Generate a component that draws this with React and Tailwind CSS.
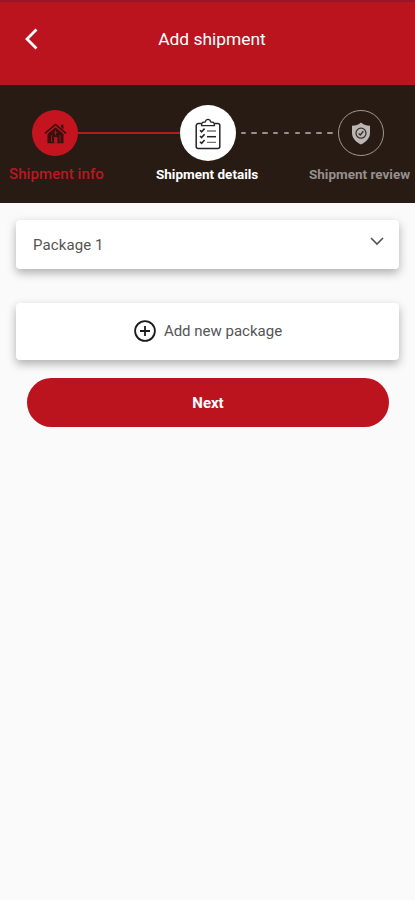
function HouseIcon() {
  return (
    <svg width="24" height="24" viewBox="0 0 24 24" fill="none">
      <path d="M2 12.400 12.500 3.500 23 12.400" stroke="#35100f" strokeWidth="1.600" />
      <path d="M18 3.800h2.500v4.500L18 6.200z" fill="#35100f" />
      <path d="M4.500 13 12.500 6.300l8 6.700v9.300h-16z" fill="#35100f" />
      <path d="M11 22.300v-6.200h3.500v6.200z" fill="#b01620" />
      <path d="M8.500 14v7M17 14v7M10.700 11.500h3.600M12.500 9.200v5" stroke="#b01620" strokeWidth=".8" />
    </svg>
  );
}

function ClipboardIcon() {
  return (
    <svg width="26" height="32" viewBox="0 0 26 32" fill="none" stroke="#252525">
      <path d="M6.500 5.600H3.200a2 2 0 0 0-2 2v21a2 2 0 0 0 2 2h19.600a2 2 0 0 0 2-2v-21a2 2 0 0 0-2-2h-3.300" strokeWidth="1.500" />
      <path d="M6.500 7.700c0-2.500.3-3.600 2.200-3.600h1.400C10.700 2.300 11.600 1.300 13 1.300s2.300 1 2.900 2.800h1.400c1.900 0 2.200 1.100 2.200 3.600z" strokeWidth="1.300" />
      <path d="m5 12.300 1.600 1.600 3-3.300M5 18l1.600 1.600 3-3.300M5 23.700l1.600 1.600 3-3.300" strokeWidth="1.600" />
      <path d="M12 13h9M12 24.400h9" stroke="#777" strokeWidth="1.300" />
      <path d="M12 18.700h9" strokeWidth="1.500" />
    </svg>
  );
}

function ShieldIcon() {
  return (
    <svg width="20" height="23" viewBox="0 0 20 23" fill="none">
      <path d="M10 .5C7.500 2.700 4.500 3.700 1 3.800v7c0 5.200 3.500 9 9 11.700 5.500-2.700 9-6.500 9-11.700v-7c-3.500-.1-6.500-1.100-9-3.300z" fill="#b9b6b4" />
      <circle cx="10" cy="11.200" r="5" stroke="#3d332d" strokeWidth="1.300" />
      <path d="m7.700 11.500 1.600 1.500 3.100-3.700" stroke="#3d332d" strokeWidth="1.400" />
    </svg>
  );
}

function Header() {
  return (
    <header className="flex h-[85px] items-start border-t-2 border-[#991727] bg-[#bb141f] text-white">
      <button className="ml-6 mt-[26px] w-[14px]" aria-label="Back">
        <svg width="14" height="22" viewBox="0 0 14 22" fill="none" stroke="white" strokeWidth="2.800">
          <path d="M12.500 1.500 3 11l9.500 9.500" />
        </svg>
      </button>
      <h1 className="mr-[29px] mt-[25px] flex-1 text-center text-[17.400px] leading-6">Add shipment</h1>
    </header>
  );
}

function Stepper() {
  return (
    <section className="h-[118px] bg-[#281b14] pt-5">
      <div className="flex h-14 items-center pl-8 pr-[31px]">
        <div className="flex size-[46px] shrink-0 items-center justify-center rounded-full bg-[#c4141f]">
          <HouseIcon />
        </div>
        <div className="h-[2px] w-[102px] shrink-0 bg-[#b71923]" />
        <div className="flex size-14 shrink-0 items-center justify-center rounded-full bg-white pt-0.5">
          <ClipboardIcon />
        </div>
        <div className="flex h-[2px] flex-1 justify-between pl-[4.500px] pr-[5.500px]">
          {Array.from({ length: 9 }, (_, i) => (
            <span key={i} className="h-[2px] w-[5.500px] rounded-full bg-[#96908c]" />
          ))}
        </div>
        <div className="flex size-[46px] shrink-0 items-center justify-center rounded-full border border-[#a39891]">
          <ShieldIcon />
        </div>
      </div>
      <div className="flex pl-[9px] pt-[3px] leading-5">
        <span className="w-[147px] text-[15px] font-medium tracking-[0.080px] text-[#bd1620]">Shipment info</span>
        <span className="w-[153px] text-[13.500px] font-bold text-white">Shipment details</span>
        <span className="whitespace-nowrap text-[13.500px] font-bold text-[#94908d]">Shipment review</span>
      </div>
    </section>
  );
}

export default function App() {
  return (
    <div className="min-h-[900px] w-[415px] bg-[#fafafa] font-[Roboto,sans-serif]">
      <Header />
      <Stepper />
      <main className="px-4 pt-[17px]">
        <button className="flex h-[49px] w-full items-center justify-between rounded-[4px] bg-white pl-[17px] pr-[15px] shadow-[0_4px_10px_rgba(0,0,0,0.3)]">
          <span className="pt-0.5 text-[15px] tracking-[0.100px] text-[#555]">Package 1</span>
          <svg className="-mt-1.5" width="14" height="9" viewBox="0 0 14 9" fill="none" stroke="#555" strokeWidth="1.700">
            <path d="m1 1 6 6 6-6" />
          </svg>
        </button>
        <button className="mt-[34px] flex h-[57px] w-full items-center justify-center gap-2 rounded-[4px] bg-white pl-px shadow-[0_4px_10px_rgba(0,0,0,0.3)]">
          <svg className="-mt-px" width="22" height="22" viewBox="0 0 22 22" fill="none" stroke="#1b1b1b" strokeWidth="1.800">
            <circle cx="11" cy="11" r="9.900" />
            <path d="M11 6v10M6 11h10" />
          </svg>
          <span className="text-[15px] text-[#555]">Add new package</span>
        </button>
        <button className="ml-[11px] mt-[18px] h-[49px] w-[362px] rounded-full bg-[#bb141f] pt-0.5 text-[15px] font-bold text-white">
          Next
        </button>
      </main>
    </div>
  );
}
